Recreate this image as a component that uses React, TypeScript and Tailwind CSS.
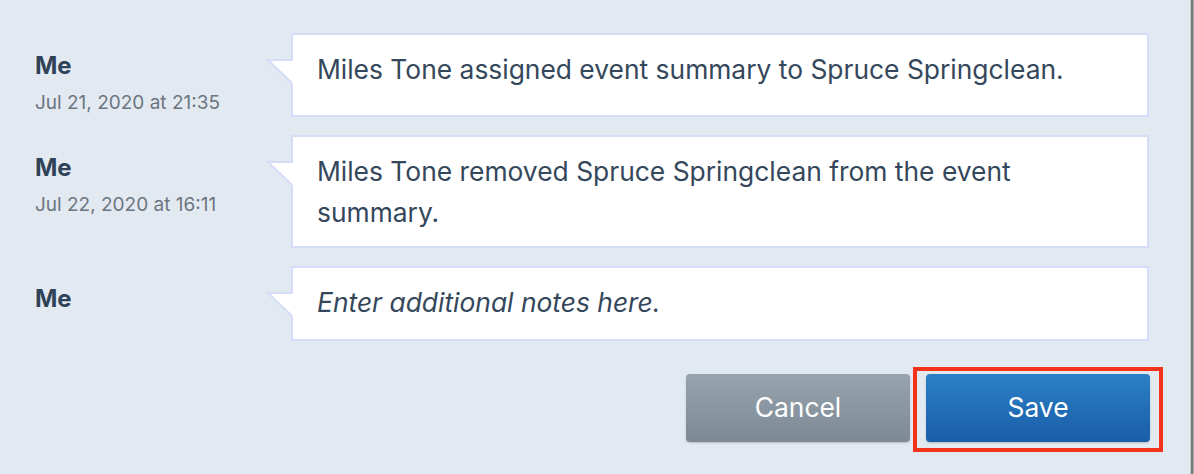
import React from "react";

const FONT = '"Inter", "Open Sans", sans-serif';

function Pointer() {
  return (
    <svg
      className="absolute left-[-26px] top-[24px]"
      width="27"
      height="27"
      viewBox="0 0 27 27"
    >
      <polygon points="0,1 27,1 27,26" fill="#ffffff" />
      <line x1="0" y1="1" x2="26" y2="1" stroke="#d5ddf8" strokeWidth="2" />
      <line x1="1" y1="1" x2="25" y2="24" stroke="#d5ddf8" strokeWidth="2" />
    </svg>
  );
}

function Row({
  date,
  children,
  bubbleClass,
}: {
  date?: string;
  children: React.ReactNode;
  bubbleClass: string;
}) {
  return (
    <div className="flex">
      <div className="w-[256px] shrink-0 pt-[18px]">
        <div className="text-[24px] font-bold leading-[30px] text-[#2f4257]">Me</div>
        {date && (
          <div className="mt-[11px] text-[19px] leading-[22px] text-[#6c7580]">{date}</div>
        )}
      </div>
      <div
        className={
          "relative w-[858px] border-2 border-[#d5ddf8] bg-white pl-[24px] pr-[24px] text-[26.4px] leading-[41px] text-[#34475b] " +
          bubbleClass
        }
      >
        <Pointer />
        {children}
      </div>
    </div>
  );
}

export default function App() {
  return (
    <div
      className="relative flex h-[474px] w-[1194px] overflow-hidden bg-[#e3e9f1]"
      style={{ fontFamily: FONT }}
    >
      <div className="flex w-[1190px] flex-col pl-[35px] pt-[33px]">
        <div className="flex flex-col gap-[18px]">
          <Row date="Jul 21, 2020 at 21:35" bubbleClass="h-[84px] pt-[14px]">
            Miles Tone assigned event summary to Spruce Springclean.
          </Row>
          <Row date="Jul 22, 2020 at 16:11" bubbleClass="h-[113px] pt-[14px]">
            Miles Tone removed Spruce Springclean from the event
            <br />
            summary.
          </Row>
          <Row bubbleClass="h-[75px] pt-[14px] italic">Enter additional notes here.</Row>
        </div>
        <div className="mt-[33px] flex justify-end gap-[16px] pr-[40px]">
          <button className="h-[68px] w-[224px] rounded-[4px] bg-gradient-to-b from-[#97a3ad] to-[#7d8a95] text-[26.4px] text-white shadow-[0_1px_2px_rgba(0,0,0,0.2)]">
            Cancel
          </button>
          <div className="relative">
            <button className="h-[68px] w-[224px] rounded-[4px] bg-gradient-to-b from-[#2c80c6] to-[#195ea8] text-[26.4px] text-white shadow-[0_1px_2px_rgba(0,0,0,0.2)]">
              Save
            </button>
            <div className="pointer-events-none absolute -bottom-[10px] -left-[13px] -right-[13px] -top-[7px] border-4 border-[#f5321a]" />
          </div>
        </div>
      </div>
      <div className="w-[1px] bg-[#c4c9cf]" />
      <div className="w-[2px] bg-[#7b7b7b]" />
      <div className="w-[1px] bg-[#a8a8a8]" />
    </div>
  );
}
